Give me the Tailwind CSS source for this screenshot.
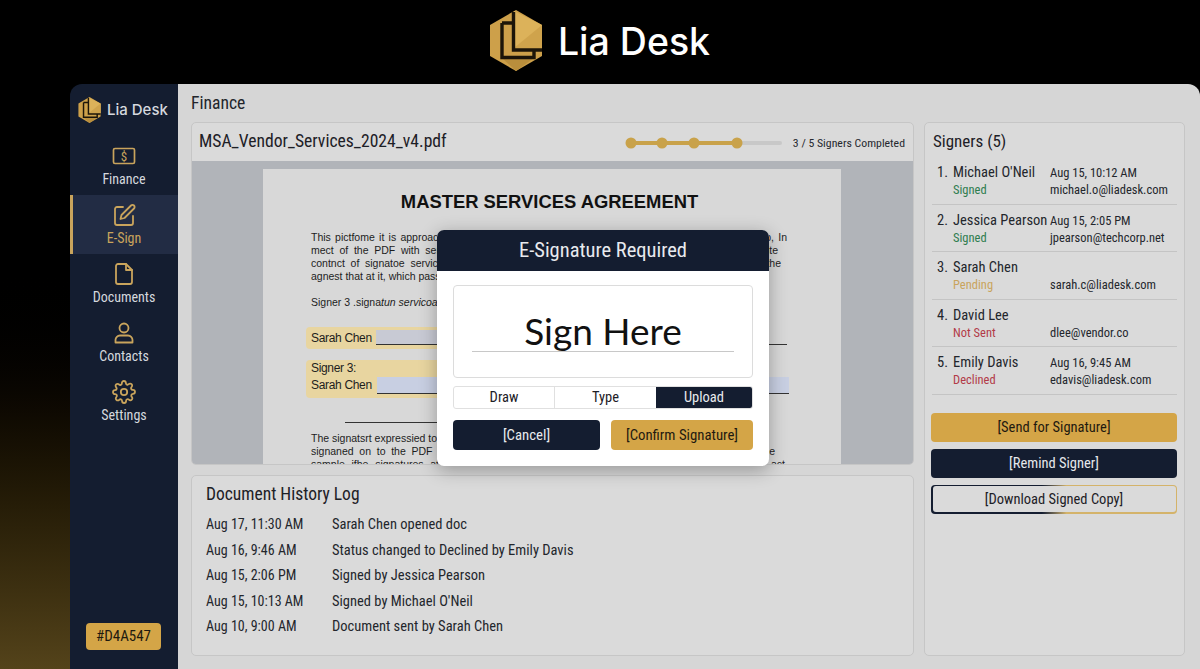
<!DOCTYPE html>
<html lang="en">
  <head>
    <meta charset="UTF-8" />
    <meta name="viewport" content="width=device-width, initial-scale=1.0" />
    <title>Lia Desk</title>
    <script src="https://cdn.jsdelivr.net/npm/@tailwindcss/browser@4"></script>
  </head>
  <body class="bg-black font-['Roboto',sans-serif]">
    <svg width="0" height="0" class="absolute">
      <symbol id="logo" viewBox="0 0 52 61">
        <polygon points="26,0 52,15 52,46 26,61 0,46 0,15" fill="#cda04a" />
        <polygon points="24,1 52,15 52,38 24,38" fill="#dcb25a" />
        <polygon points="24,38 52,15 52,38" fill="#cfa34c" />
        <polygon points="12,48 44,48 26,61" fill="#b98e3c" />
        <path d="M23.5 2V40H52M12 13H23.5M12 13V47.5H44V40" fill="none" stroke="#1c1509" stroke-width="3.4" />
      </symbol>
    </svg>

    <div class="w-[1200px] h-[669px] overflow-hidden flex flex-col">
      <header class="h-[84px] shrink-0 flex items-center justify-center gap-[16px] pb-[3px] bg-black">
        <svg class="w-[52px] h-[61px]"><use href="#logo" /></svg>
        <span class="mt-[2px] font-['Inter',sans-serif] font-medium text-[37.5px] leading-none text-white">Lia Desk</span>
      </header>

      <div class="flex-1 flex pl-[70px] bg-linear-to-b from-black from-30% to-[#54431a]">
        <!-- sidebar -->
        <aside class="w-[108px] shrink-0 bg-[#141d30] rounded-tl-xl flex flex-col">
          <div class="h-[52px] flex items-center pl-[8px] gap-[6px]">
            <svg class="w-[23px] h-[26px]"><use href="#logo" /></svg>
            <span class="font-['Inter',sans-serif] font-medium text-[15px] text-[#d5d8de] whitespace-nowrap">Lia Desk</span>
          </div>
          <nav class="flex flex-col">
            <a class="h-[59px] flex flex-col items-center pt-[9px] gap-[4px] text-[14px] leading-[16px] text-[#d5d8de] font-stretch-condensed">
              <svg class="w-[24px] h-[22px]" viewBox="0 0 24 22" fill="none" stroke="#c9a45c" stroke-width="1.7">
                <rect x="1.5" y="3.5" width="21" height="15" rx="1.5" />
                <text x="12" y="16" text-anchor="middle" font-size="13" fill="#c9a45c" stroke="none" font-family="Roboto">$</text>
              </svg>
              Finance
            </a>
            <a class="h-[59px] flex flex-col items-center pt-[8px] gap-[3px] text-[14px] leading-[16px] text-[#c9a45c] bg-[#222c44] border-l-[3px] border-[#c9a45c] pr-[3px] font-stretch-condensed">
              <svg class="w-[24px] h-[24px]" viewBox="0 0 24 24" fill="none" stroke="#c9a45c" stroke-width="1.8" stroke-linecap="round" stroke-linejoin="round">
                <path d="M11 4H5a2 2 0 0 0-2 2v14a2 2 0 0 0 2 2h14a2 2 0 0 0 2-2v-7" />
                <path d="M19 2.5a2.1 2.1 0 0 1 3 3L12.5 15l-4 1 1-4z" />
              </svg>
              E-Sign
            </a>
            <a class="h-[59px] flex flex-col items-center pt-[8px] gap-[3px] text-[14px] leading-[16px] text-[#d5d8de] font-stretch-condensed">
              <svg class="w-[24px] h-[24px]" viewBox="0 0 24 24" fill="none" stroke="#c9a45c" stroke-width="1.8" stroke-linecap="round" stroke-linejoin="round">
                <path d="M14 2H6a2 2 0 0 0-2 2v16a2 2 0 0 0 2 2h12a2 2 0 0 0 2-2V8z" />
                <path d="M14 2v6h6" />
              </svg>
              Documents
            </a>
            <a class="h-[59px] flex flex-col items-center pt-[8px] gap-[3px] text-[14px] leading-[16px] text-[#d5d8de] font-stretch-condensed">
              <svg class="w-[24px] h-[24px]" viewBox="0 0 24 24" fill="none" stroke="#c9a45c" stroke-width="1.8" stroke-linecap="round" stroke-linejoin="round">
                <circle cx="12" cy="7" r="4.5" />
                <path d="M3.5 21.5v-2.5a4.5 4.5 0 0 1 4.5-4.5h8a4.5 4.5 0 0 1 4.5 4.5v2.5z" />
              </svg>
              Contacts
            </a>
            <a class="h-[59px] flex flex-col items-center pt-[8px] gap-[3px] text-[14px] leading-[16px] text-[#d5d8de] font-stretch-condensed">
              <svg class="w-[24px] h-[24px]" viewBox="0 0 24 24" fill="none" stroke="#c9a45c" stroke-width="1.8" stroke-linecap="round" stroke-linejoin="round">
                <circle cx="12" cy="12" r="3.2" />
                <path d="M19.4 15a1.65 1.65 0 0 0 .33 1.82l.06.06a2 2 0 1 1-2.83 2.83l-.06-.06a1.65 1.65 0 0 0-2.82 1.17V21a2 2 0 0 1-4 0v-.09a1.65 1.65 0 0 0-2.82-1.12l-.06.06a2 2 0 1 1-2.83-2.83l.06-.06a1.65 1.65 0 0 0-1.17-2.82H3a2 2 0 0 1 0-4h.09a1.65 1.65 0 0 0 1.12-2.82l-.06-.06a2 2 0 1 1 2.83-2.83l.06.06a1.65 1.65 0 0 0 2.82-1.17V3a2 2 0 0 1 4 0v.09a1.65 1.65 0 0 0 2.82 1.12l.06-.06a2 2 0 1 1 2.83 2.83l-.06.06a1.65 1.65 0 0 0 1.17 2.82H21a2 2 0 0 1 0 4h-.09a1.65 1.65 0 0 0-1.51 1z" />
              </svg>
              Settings
            </a>
          </nav>
          <div class="mt-auto mb-[19px] ml-[16px] w-[75px] h-[27px] rounded-[4px] bg-[#d4a547] flex items-center justify-center text-[15px] text-[#1f1a10] font-stretch-condensed">#D4A547</div>
        </aside>

        <!-- main -->
        <main class="relative flex-1 min-w-0 bg-[#d6d6d6] rounded-tr-xl flex flex-col pl-[13px] pr-[15px]">
          <h1 class="h-[38px] pt-[8px] text-[17.6px] leading-[22px] text-[#22252b] font-stretch-condensed">Finance</h1>
          <div class="flex gap-[10px] h-[534px]">
            <div class="w-[723px] flex flex-col gap-[10px]">
              <!-- document viewer -->
              <section class="h-[343px] rounded-[5px] border border-[#c6c6c6] bg-[#dadada] overflow-hidden flex flex-col">
                <div class="h-[38px] shrink-0 flex items-center pl-[7px] pr-[8px]">
                  <span class="-mt-[2px] text-[17.6px] text-[#1d2026] font-stretch-condensed">MSA_Vendor_Services_2024_v4.pdf</span>
                  <svg class="ml-auto mt-[1px] w-[158px] h-[14px]" viewBox="0 0 158 14">
                    <rect x="5" y="5" width="152" height="4" rx="2" fill="#c8c8c8" />
                    <rect x="5" y="5" width="107" height="4" fill="#c9a24a" />
                    <circle cx="6" cy="7" r="5.5" fill="#c9a24a" />
                    <circle cx="37" cy="7" r="5.5" fill="#c9a24a" />
                    <circle cx="69" cy="7" r="5.5" fill="#c9a24a" />
                    <circle cx="112" cy="7" r="5.5" fill="#c9a24a" />
                  </svg>
                  <span class="ml-[10px] mt-[3px] text-[11.8px] text-[#25282e] whitespace-nowrap font-stretch-condensed">3 / 5 Signers Completed</span>
                </div>
                <div class="flex-1 bg-[#b1b4b9] pt-[8px] pl-[71px] overflow-hidden">
                  <div class="w-[578px] h-[320px] bg-[#d8d8d8] pt-[21px] font-['Liberation_Sans',sans-serif] text-[#1d1d1d]">
                    <h2 class="text-[18.4px] leading-[24px] font-bold text-center text-[#111] -ml-[5px]">MASTER SERVICES AGREEMENT</h2>
                    <div class="mt-[17px] pl-[48px] text-[10.5px] leading-[13px] whitespace-nowrap">
                      <p class="w-[476px] [text-align-last:justify]">This pictfome it is approach to the signature of record to complete the form for each listed step, In</p>
                      <p class="w-[467px] [text-align-last:justify]">mect of the PDF with services provided for the parties listed on the service page of the site</p>
                      <p class="w-[470px] [text-align-last:justify]">contnct of signatoe services for all parties who are named in the document and listed on the</p>
                      <p>agnest that at it, which pass through the signing process.</p>
                      <p class="mt-[13px]">Signer 3 .signa<i>tun servicoas</i></p>
                    </div>
                    <div class="mt-[18px] ml-[43px] mr-[52px] flex flex-col text-[12px] leading-[16px] tracking-[-0.33px]">
                      <div class="h-[22px] flex items-end">
                        <div class="w-[200px] h-full bg-[#e8d5a0] rounded-l-[4px] pl-[5px] pt-[3px] flex">
                          <span class="w-[65px]">Sarah Chen</span>
                          <span class="flex-1 h-[15px] border-b border-[#333] bg-[#c8cad4]"></span>
                        </div>
                        <span class="flex-1 mr-[2px] mb-[4px] border-b border-[#333]"></span>
                      </div>
                      <div class="mt-[11px] h-[38px] flex items-end">
                        <div class="w-[200px] h-full bg-[#e8d5a0] rounded-l-[4px] pl-[5px] flex">
                          <span class="w-[66px] leading-[17px]">Signer 3:<br />Sarah Chen</span>
                          <span class="flex-1 mt-[17px] h-[17px] border-b border-[#333] bg-[#c8cfe2]"></span>
                        </div>
                        <span class="flex-1 mb-[4px] h-[17px] border-b border-[#333] bg-[#c8cfe2]"></span>
                      </div>
                    </div>
                    <div class="mt-[24px] ml-[82px] w-[300px] border-t border-[#333]"></div>
                    <div class="mt-[9px] pl-[48px] text-[10.5px] leading-[13px] whitespace-nowrap">
                      <p class="w-[400px]">The signatsrt expressied to the terms of this agreement shall be binding</p>
                      <p class="w-[464px] [text-align-last:justify]">signaned on to the PDF Record of the parties. Service terms are now in effect and are the</p>
                      <p class="w-[474px] [text-align-last:justify]">sample ifhe signatures at the time of execution of this agreement as stated in the final act</p>
                    </div>
                  </div>
                </div>
              </section>

              <!-- history -->
              <section class="flex-1 rounded-[5px] border border-[#c6c6c6] bg-[#dadada] pl-[14px] pt-[7px]">
                <h2 class="text-[17.5px] leading-[22px] text-[#1d2026] font-stretch-condensed">Document History Log</h2>
                <ul class="mt-[7px] text-[14.5px] leading-[25.5px] text-[#23262c] font-stretch-condensed">
                  <li class="flex"><span class="w-[126px] text-[14px]">Aug 17, 11:30 AM</span><span>Sarah Chen opened doc</span></li>
                  <li class="flex"><span class="w-[126px] text-[14px]">Aug 16, 9:46 AM</span><span>Status changed to Declined by Emily Davis</span></li>
                  <li class="flex"><span class="w-[126px] text-[14px]">Aug 15, 2:06 PM</span><span>Signed by Jessica Pearson</span></li>
                  <li class="flex"><span class="w-[126px] text-[14px]">Aug 15, 10:13 AM</span><span>Signed by Michael O'Neil</span></li>
                  <li class="flex"><span class="w-[126px] text-[14px]">Aug 10, 9:00 AM</span><span>Document sent by Sarah Chen</span></li>
                </ul>
              </section>
            </div>

            <!-- signers -->
            <section class="w-[261px] rounded-[5px] border border-[#c6c6c6] bg-[#dadada] px-[7px] flex flex-col">
              <h2 class="pt-[7px] h-[34px] text-[17px] leading-[22px] pl-[1px] text-[#1d2026] font-stretch-condensed">Signers (5)</h2>
              <ul class="font-stretch-condensed">
                <li class="h-[47.6px] border-b border-[#c4c4c4] grid grid-cols-[113px_1fr] content-start pl-[5px] pt-[7px] text-[12.5px] leading-[17px] text-[#23262c]">
                  <span class="text-[14.5px]"><span class="inline-block w-[16px]">1.</span>Michael O'Neil</span><span>Aug 15, 10:12 AM</span>
                  <span class="pl-[16px] text-[#2f7d4f]">Signed</span><span>michael.o@liadesk.com</span>
                </li>
                <li class="h-[47.6px] border-b border-[#c4c4c4] grid grid-cols-[113px_1fr] content-start pl-[5px] pt-[7px] text-[12.5px] leading-[17px] text-[#23262c]">
                  <span class="text-[14.5px] whitespace-nowrap"><span class="inline-block w-[16px]">2.</span>Jessica Pearson</span><span>Aug 15, 2:05 PM</span>
                  <span class="pl-[16px] text-[#2f7d4f]">Signed</span><span>jpearson@techcorp.net</span>
                </li>
                <li class="h-[47.6px] border-b border-[#c4c4c4] grid grid-cols-[113px_1fr] content-start pl-[5px] pt-[7px] text-[12.5px] leading-[17px] text-[#23262c]">
                  <span class="text-[14.5px]"><span class="inline-block w-[16px]">3.</span>Sarah Chen</span><span></span>
                  <span class="pl-[16px] text-[#c9a45c]">Pending</span><span>sarah.c@liadesk.com</span>
                </li>
                <li class="h-[47.6px] border-b border-[#c4c4c4] grid grid-cols-[113px_1fr] content-start pl-[5px] pt-[7px] text-[12.5px] leading-[17px] text-[#23262c]">
                  <span class="text-[14.5px]"><span class="inline-block w-[16px]">4.</span>David Lee</span><span></span>
                  <span class="pl-[16px] text-[#b23a48]">Not Sent</span><span>dlee@vendor.co</span>
                </li>
                <li class="h-[47.6px] border-b border-[#c4c4c4] grid grid-cols-[113px_1fr] content-start pl-[5px] pt-[7px] text-[12.5px] leading-[17px] text-[#23262c]">
                  <span class="text-[14.5px]"><span class="inline-block w-[16px]">5.</span>Emily Davis</span><span>Aug 16, 9:45 AM</span>
                  <span class="pl-[16px] text-[#b23a48]">Declined</span><span>edavis@liadesk.com</span>
                </li>
              </ul>
              <div class="mt-[18px] -ml-[1px] flex flex-col gap-[7px] text-[14.5px] font-stretch-condensed">
                <button class="h-[29px] pt-[1px] rounded-[4px] bg-[#d4a547] text-[#1f1a10]">[Send for Signature]</button>
                <button class="h-[29px] pt-[1px] rounded-[4px] bg-[#141d30] text-[#e6e8ec]">[Remind Signer]</button>
                <div class="h-[29px] rounded-[4px] p-[1.5px] bg-linear-to-r from-[#141d30] from-45% to-[#d4b36a] to-55%">
                  <button class="w-full h-full rounded-[3px] bg-[#dadada] text-[#1d2026]">[Download Signed Copy]</button>
                </div>
              </div>
            </section>
          </div>

          <!-- signature modal -->
          <div class="absolute left-[259px] top-[146px] w-[332px] h-[236px] rounded-[7px] bg-white shadow-[0_4px_18px_rgba(0,0,0,0.3)] overflow-hidden flex flex-col">
            <div class="h-[41px] shrink-0 bg-[#141d30] flex items-center justify-center text-[20.5px] text-[#e8eaee] font-stretch-condensed">E-Signature Required</div>
            <div class="px-[16px] pt-[14px]">
              <div class="h-[93px] rounded-[4px] border border-[#dcdcdc] flex flex-col items-center relative">
                <span class="absolute top-[17px] font-['Lato',sans-serif] text-[37px] leading-[56px] text-[#111]">Sign Here</span>
                <div class="absolute top-[65px] left-[18px] right-[18px] border-t border-[#c8c8c8]"></div>
              </div>
              <div class="mt-[8px] h-[23px] rounded-[3px] border border-[#e0e0e0] grid grid-cols-[101px_101px_1fr] text-[14.5px] leading-[21px] text-center text-[#1d2026] overflow-hidden font-stretch-condensed">
                <span class="border-r border-[#e0e0e0]">Draw</span>
                <span>Type</span>
                <span class="bg-[#141d30] text-[#e8eaee]">Upload</span>
              </div>
              <div class="mt-[11px] flex justify-between text-[14.8px] font-stretch-condensed">
                <button class="w-[147px] h-[30px] pt-[1px] rounded-[4px] bg-[#141d30] text-[#e8eaee]">[Cancel]</button>
                <button class="w-[142px] h-[30px] pt-[1px] rounded-[4px] bg-[#d4a547] text-[#1f1a10]">[Confirm Signature]</button>
              </div>
            </div>
          </div>
        </main>
      </div>
    </div>
  </body>
</html>
